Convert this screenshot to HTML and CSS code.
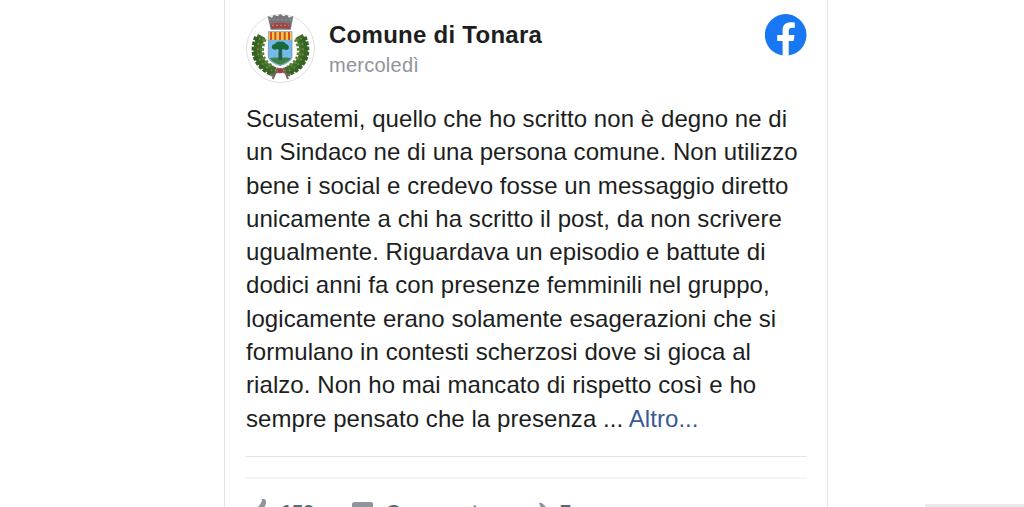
FILE: index.html
```html
<!DOCTYPE html>
<html lang="it">
<head>
    <meta charset="UTF-8">
    <meta name="viewport" content="width=device-width, initial-scale=1.0">
    <title>Comune di Tonara</title>
    <link rel="stylesheet" href="styles.css">
</head>
<body>
    <article class="post">
        <header class="post-header">
            <svg class="avatar" viewBox="18 18 207 207" aria-label="Stemma">
                <circle cx="121.500" cy="121.500" r="102" fill="#fff" stroke="#dedede" stroke-width="3"/>
                <!-- Wreath -->
                <g fill="none">
                    <path d="M65 84C40 132 54 172 105 190M177 84C204 132 190 172 137 190" stroke="#3f6a27" stroke-width="25"/>
                    <path d="M50 87C30 136 49 182 105 200M192 87C213 136 195 182 137 200" stroke="#356023" stroke-width="15" stroke-dasharray="11 4"/>
                    <path d="M74 93C56 134 68 160 99 178M168 93C187 134 176 160 143 178" stroke="#598339" stroke-width="13" stroke-dasharray="8 6"/>
                    <path d="M60 90C43 136 59 174 101 190M182 90C200 136 184 174 143 190" stroke="#7f964c" stroke-width="4" stroke-dasharray="5 11"/>
                    <path d="M91 203L132 182L144 213M151 203L112 182L98 213" stroke="#76645a" stroke-width="6"/>
                </g>
                <circle cx="121" cy="188" r="8" fill="#a43b37"/>
                <!-- Crown -->
                <path d="M83 24L96 29L102 20L112 25L121 18L130 25L141 20L147 29L160 24L152 65H92Z" fill="#77767b"/>
                <path d="M92 48Q121 40 151 48L149 63Q121 57 94 63Z" fill="#a4443f"/>
                <path d="M87 35L155 35M96 52L147 52" stroke="#918e92" stroke-width="4" stroke-dasharray="6 6"/>
                <!-- Shield -->
                <path d="M85 71H156V147Q154 163 121 173Q88 163 85 147Z" fill="#75b9e8" stroke="#68899d" stroke-width="2"/>
                <path d="M86 72H155V96H86Z" fill="#f1cb45"/>
                <path d="M93 72V96M106 72V96M120 72V96M134 72V96M147 72V96" stroke="#d34b34" stroke-width="6"/>
                <path d="M89 151Q105 146 121 150Q138 146 153 151Q143 164 121 170Q98 164 89 151Z" fill="#3e8142"/>
                <path d="M116 120H126L127 156H115Z" fill="#285b49"/>
                <path d="M96 121Q93 110 104 108Q111 98 121 101Q133 98 138 108Q149 111 146 122Q139 129 131 123Q121 129 113 123Q102 128 96 121Z" fill="#176a3e"/>
            </svg>
            <div class="author">
                <h1 class="name">Comune di Tonara</h1>
                <div class="date">mercoledì</div>
            </div>
            <svg class="facebook" viewBox="0 0 42 42" aria-label="Facebook">
                <path d="M17.600 41.500V27H12.200V21H17.600V16.300C17.600 11 20.700 8.200 25.500 8.200C27.800 8.200 29.800 8.600 29.800 8.600V13.700H27.200C24.600 13.700 23.700 15.300 23.700 17V21H29.500L28.600 27H23.700V41.500A20.800 20.800 0 1 0 17.600 41.500Z" fill="#1877f2"/>
            </svg>
        </header>
        <p class="message">
            Scusatemi, quello che ho scritto non è degno ne di<br>
            un Sindaco ne di una persona comune. Non utilizzo<br>
            bene i social e credevo fosse un messaggio diretto<br>
            unicamente a chi ha scritto il post, da non scrivere<br>
            ugualmente. Riguardava un episodio e battute di<br>
            dodici anni fa con presenze femminili nel gruppo,<br>
            logicamente erano solamente esagerazioni che si<br>
            formulano in contesti scherzosi dove si gioca al<br>
            rialzo. Non ho mai mancato di rispetto così e ho<br>
            sempre pensato che la presenza ... <a class="more" href="#">Altro...</a>
        </p>
        <div class="divider"></div>
        <footer class="actions">
            <span class="action like">
                <svg class="icon" viewBox="0 0 24 24"><path d="M1 12H6V23H1ZM7 12C12 8 16 5 16 0C21 -1 21 4 18 9H23V20L20 23H7Z"/></svg>
                159
            </span>
            <span class="action comment">
                <svg class="icon" viewBox="0 0 24 24"><path d="M4 3H20Q22 3 22 5V16Q22 19 19 19H11L6 24V19H3Q1 19 1 16V5Q1 3 4 3Z"/></svg>
                Commenta
            </span>
            <span class="action share">
                <svg class="icon" viewBox="0 0 24 24"><path d="M10 4Q12 3 14 5L22 13L12 22V16Q6 16 1 22Q3 10 12 9Z"/></svg>
                7
            </span>
        </footer>
    </article>
    <div class="status-bar"></div>
</body>
</html>
```

FILE: styles.css
```css
* {
    box-sizing: border-box;
}
body {
    margin: 0;
    height: 507px;
    overflow: hidden;
    background-color: #fff;
    font-family: "Liberation Sans", Arial, sans-serif;
    color: #1c1e21;
}
.post {
    width: 604px;
    height: 507px;
    margin-left: 224px;
    padding: 14px 20.5px 0 21px;
    border: solid #e4e4e4;
    border-width: 0 1px;
    overflow: hidden;
}
.post-header {
    display: flex;
    height: 88px;
}
.avatar {
    width: 69px;
    height: 69px;
}
.author {
    flex: 1;
    padding: 6px 0 0 14px;
}
.name {
    margin: 0;
    font-size: 24px;
    line-height: 30px;
    letter-spacing: 0.27px;
}
.date {
    color: #90949c;
    font-size: 20px;
    line-height: 30px;
    letter-spacing: 0.25px;
}
.facebook {
    width: 42px;
    height: 42px;
}
.message {
    margin: 0;
    font-size: 24px;
    line-height: 33.3px;
    letter-spacing: 0.07px;
    white-space: nowrap;
}
.more {
    color: #385898;
    text-decoration: none;
}
.divider {
    height: 23px;
    margin-top: 21px;
    border-top: 1px solid #e5e5e5;
    border-bottom: 2px solid #f5f5f5;
}
.actions {
    display: flex;
    height: 28px;
    padding-top: 20px;
    overflow: hidden;
    color: #616770;
    font-size: 20px;
    font-weight: bold;
    line-height: 26px;
}
.action {
    display: flex;
    gap: 11px;
}
.like {
    width: 105px;
}
.comment {
    width: 178px;
}
.share {
    gap: 7px;
}
.icon {
    width: 24px;
    height: 24px;
    fill: #90949c;
}
.status-bar {
    position: fixed;
    right: 0;
    bottom: 0;
    width: 99px;
    height: 3px;
    background-color: #e9e9e9;
}
```
